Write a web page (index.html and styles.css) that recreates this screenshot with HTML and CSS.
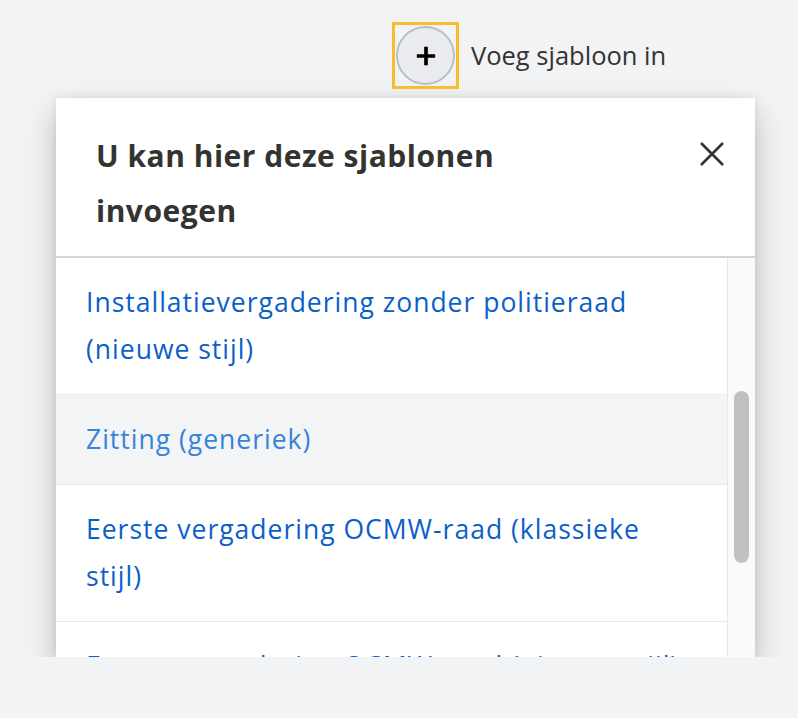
FILE: index.html
```html
<!DOCTYPE html>
<html lang="nl">
<head>
<meta charset="utf-8">
<title>Sjablonen</title>
<link rel="stylesheet" href="styles.css">
</head>
<body>
<div class="page">
  <div class="toolbar">
    <button class="add-btn" type="button" aria-label="Voeg sjabloon in">
      <span class="circle">
        <svg width="24" height="24" viewBox="0 0 24 24" aria-hidden="true"><path d="M12 2v20M2 12h20" stroke="#000" stroke-width="4" fill="none"/></svg>
      </span>
    </button>
    <span class="add-label">Voeg sjabloon in</span>
  </div>
  <div class="popup">
    <div class="popup-header">
      <h2 class="popup-title">U kan hier deze sjablonen invoegen</h2>
      <button class="close" type="button" aria-label="Sluiten">
        <svg width="26" height="26" viewBox="0 0 26 26" aria-hidden="true"><path d="M2 2L24 24M24 2L2 24" stroke="#333" stroke-width="2.6" fill="none"/></svg>
      </button>
    </div>
    <div class="popup-body">
      <ul class="list">
        <li class="item"><a href="#">Installatievergadering zonder politieraad (nieuwe stijl)</a></li>
        <li class="item hover"><a href="#">Zitting (generiek)</a></li>
        <li class="item"><a href="#">Eerste vergadering OCMW-raad (klassieke stijl)</a></li>
        <li class="item"><a href="#">Eerste vergadering OCMW-raad (nieuwe stijl)</a></li>
      </ul>
      <div class="track"><div class="thumb"></div></div>
    </div>
  </div>
</div>
</body>
</html>
```
FILE: styles.css
```css
* { box-sizing: border-box; }
body {
  margin: 0;
  background: #f2f3f5;
  font-family: "Open Sans", sans-serif;
  color: #333332;
}
.page {
  margin-left: 56px;
  width: 699px;
  padding-top: 22px;
}
.toolbar {
  display: flex;
  align-items: center;
  padding-left: 336px;
  gap: 12px;
}
.add-btn {
  width: 67px;
  height: 67px;
  padding: 0;
  border: 3px solid #f7bd2c;
  background: transparent;
  display: flex;
  align-items: center;
  justify-content: center;
}
.circle {
  width: 59px;
  height: 59px;
  border-radius: 50%;
  border: 2px solid #b4bfcb;
  background: #e9ebee;
  display: flex;
  align-items: center;
  justify-content: center;
}
.circle svg { width: 22px; height: 22px; }
.add-label {
  font-size: 25.5px;
  color: #333332;
  padding-bottom: 2px;
}
.popup {
  margin-top: 9px;
  height: 559px;
  background: #fff;
  box-shadow: 0 14px 30px rgba(0,0,0,0.22), 0 0 8px rgba(0,0,0,0.08);
  display: flex;
  flex-direction: column;
  overflow: hidden;
}
.popup-header {
  display: flex;
  justify-content: space-between;
  align-items: flex-start;
  padding: 30px 30px 18px 40px;
  border-bottom: 2px solid #cfd5dd;
  flex: none;
}
.popup-title {
  margin: 0;
  font-size: 30px;
  letter-spacing: 0.5px;
  line-height: 55px;
  font-weight: 700;
  width: 470px;
  color: #333332;
}
.close {
  border: 0;
  background: none;
  padding: 0;
  margin-top: 13px;
  width: 26px;
  height: 26px;
}
.popup-body {
  display: flex;
  flex: 1;
  min-height: 0;
}
.list {
  list-style: none;
  margin: 0;
  padding: 0;
  flex: 1;
}
.item {
  padding: 21px 30px 21px 30px;
  border-bottom: 1px solid #e8ebee;
  font-size: 26.5px;
  letter-spacing: 1px;
  line-height: 47px;
}
.item a {
  color: #0b5fc8;
  text-decoration: none;
}
.item.hover { background: #f3f4f6; }
.item.hover a { color: #3684d6; }
.track {
  width: 28px;
  flex: none;
  background: #fafafa;
  border-left: 1px solid #e8e8e8;
  padding-top: 133px;
  padding-left: 6px;
}
.thumb {
  width: 15px;
  height: 172px;
  border-radius: 8px;
  background: #c1c1c1;
}
```
